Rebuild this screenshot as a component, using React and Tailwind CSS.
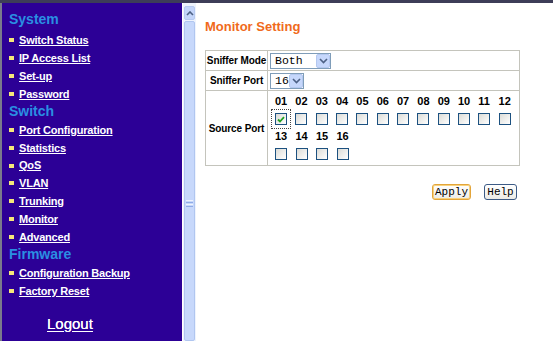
import { Fragment } from 'react';

const menu = [
  { title: 'System', gap: 'h-[3.5px]', items: ['Switch Status', 'IP Access List', 'Set-up', 'Password'] },
  { title: 'Switch', gap: 'h-[1.5px]', items: ['Port Configuration', 'Statistics', 'QoS', 'VLAN', 'Trunking', 'Monitor', 'Advanced'] },
  { title: 'Firmware', gap: 'h-[1.5px]', items: ['Configuration Backup', 'Factory Reset'] },
];

const ports = ['01', '02', '03', '04', '05', '06', '07', '08', '09', '10', '11', '12'];
const ports2 = ['13', '14', '15', '16'];

const mono = { fontFamily: '"Liberation Mono", "DejaVu Sans Mono", monospace' };

const Chevron = () => (
  <svg width="9" height="6" viewBox="0 0 9 6">
    <path d="M1 1 L4.5 4.5 L8 1" fill="none" stroke="#4d6185" strokeWidth="1.6" />
  </svg>
);

const Select = ({ value, width }) => (
  <div className={`flex items-center h-[16px] border border-[#7f9db9] bg-white ${width}`}>
    <span className="flex-1 pl-[4px] text-[11.5px] leading-none text-black" style={mono}>
      {value}
    </span>
    <span className="w-[14px] h-[14px] shrink-0 flex items-center justify-center bg-[#c6d7fb] border border-[#b4c8f0] rounded-[2px]">
      <Chevron />
    </span>
  </div>
);

const Checkbox = ({ checked }) => (
  <span className="w-[12px] h-[12px] border border-[#1c5180] bg-gradient-to-br from-[#dcdcd7] to-white flex items-center justify-center">
    {checked && (
      <svg width="8" height="7" viewBox="0 0 8 7">
        <path d="M1 3.5 L3 5.5 L7 1.2" fill="none" stroke="#21a121" strokeWidth="1.8" />
      </svg>
    )}
  </span>
);

const Sidebar = () => (
  <aside
    className="w-[182px] shrink-0 bg-[#2c0096] border-l-2 border-[#7a7a8c] flex flex-col pt-[8px]"
    style={{ fontFamily: '"Liberation Sans", Arial, sans-serif' }}
  >
    {menu.map((group) => (
      <Fragment key={group.title}>
        <div className="h-[17px] pl-[7px] flex items-center text-[14px] font-bold text-[#2a8fe2]">
          {group.title}
        </div>
        <div className={group.gap} />
        {group.items.map((item) => (
          <div key={item} className="h-[17.8px] pl-[7px] flex items-center gap-[5px]">
            <span className="w-[5px] h-[4px] bg-[#f5e87a]" />
            <span className="text-[11px] font-bold text-white underline underline-offset-[1px] tracking-[-0.2px]">
              {item}
            </span>
          </div>
        ))}
      </Fragment>
    ))}
    <div className="mt-[13px] pl-[45px] text-[15px] text-white underline underline-offset-[2px] [text-shadow:0_0_0.4px_white]">
      Logout
    </div>
  </aside>
);

const Scrollbar = () => (
  <div className="w-[14px] shrink-0 bg-[#eef3fd] border-l border-white flex flex-col px-[1px] pt-[3px]">
    <div className="h-[14px] bg-[#c4d5fa] border border-[#b7caf1] rounded-[2px] flex items-center justify-center">
      <svg width="8" height="5" viewBox="0 0 8 5">
        <path d="M1 4 L4 1 L7 4" fill="none" stroke="#4d6185" strokeWidth="1.6" />
      </svg>
    </div>
    <div className="flex-1 mt-[1px] bg-[#c7d8fb] border border-[#b0c6f0] rounded-[2px] flex flex-col items-center pt-[178px]">
      <div className="w-[7px] flex flex-col gap-[1px]">
        <span className="h-[1px] bg-[#eef3fd]" />
        <span className="h-[1px] bg-[#8fabe6]" />
        <span className="h-[1px] bg-[#eef3fd]" />
        <span className="h-[1px] bg-[#8fabe6]" />
      </div>
    </div>
  </div>
);

const labelCell =
  'border border-[#c4c4bc] text-[10px] font-bold text-black text-center whitespace-nowrap px-0 tracking-[-0.1px]';
const valueCell = 'border border-[#c4c4bc] px-[2px]';

export default function App() {
  return (
    <div className="w-[553px] h-[341px] overflow-hidden flex bg-white border-t-[3px] border-[#3d3d58]">
      <Sidebar />
      <Scrollbar />
      <main className="flex-1 pl-[9px] pt-[15px]" style={{ fontFamily: '"Liberation Sans", Arial, sans-serif' }}>
        <h1 className="text-[13px] font-bold text-[#f06a1c] leading-[18px]">Monitor Setting</h1>
        <table className="mt-[14px] w-[315px] table-fixed border-collapse border border-[#c4c4bc]">
          <colgroup>
            <col className="w-[62px]" />
            <col />
          </colgroup>
          <tbody>
            <tr className="h-[20px]">
              <td className={labelCell}>Sniffer Mode</td>
              <td className={valueCell}>
                <Select value="Both" width="w-[61px]" />
              </td>
            </tr>
            <tr className="h-[20px]">
              <td className={labelCell}>Sniffer Port</td>
              <td className={valueCell}>
                <Select value="16" width="w-[34px]" />
              </td>
            </tr>
            <tr className="h-[75px]">
              <td className={labelCell}>Source Port</td>
              <td className="border border-[#c4c4bc] pl-[7px] py-[1px]">
                <div className="flex text-[11px] font-bold h-[17px] items-center">
                  {ports.map((p) => (
                    <span key={p} className="w-[20.5px]">{p}</span>
                  ))}
                </div>
                <div className="flex h-[18px] items-center">
                  {ports.map((p, i) => (
                    <span key={p} className="w-[20.5px] flex">
                      {i === 0 ? (
                        <span className="outline-1 outline-dotted outline-[#444] outline-offset-[3px]">
                          <Checkbox checked />
                        </span>
                      ) : (
                        <Checkbox />
                      )}
                    </span>
                  ))}
                </div>
                <div className="flex text-[11px] font-bold h-[17px] items-center">
                  {ports2.map((p) => (
                    <span key={p} className="w-[20.5px]">{p}</span>
                  ))}
                </div>
                <div className="flex h-[18px] items-center">
                  {ports2.map((p) => (
                    <span key={p} className="w-[20.5px] flex">
                      <Checkbox />
                    </span>
                  ))}
                </div>
              </td>
            </tr>
          </tbody>
        </table>
        <div className="w-[312px] flex justify-end gap-[13px] mt-[18px]" style={mono}>
          <button className="h-[16px] w-[39px] text-[11px] leading-none text-black bg-gradient-to-b from-white to-[#ecebe6] border border-[#e3a53a] rounded-[3px] shadow-[inset_0_0_0_1px_#f9d27b]">
            Apply
          </button>
          <button className="h-[16px] w-[33px] text-[11px] leading-none text-black bg-gradient-to-b from-white to-[#ecebe6] border border-[#3c5a85] rounded-[3px]">
            Help
          </button>
        </div>
      </main>
    </div>
  );
}
